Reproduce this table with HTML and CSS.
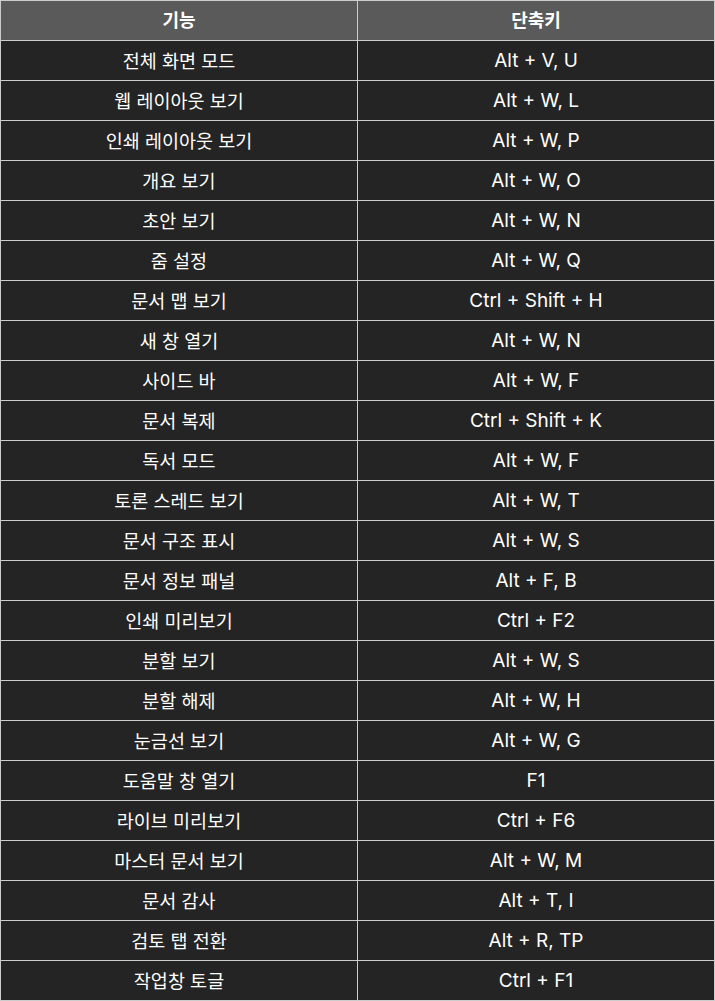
FILE: index.html
```html
<!DOCTYPE html>
<html lang="ko">
  <head>
    <meta charset="utf-8" />
    <meta name="viewport" content="width=device-width, initial-scale=1">
    <title>단축키</title>
    <link rel="stylesheet" href="styles.css">
  </head>
  <body>
    <table class="keys">
      <thead>
        <tr><th>기능</th><th>단축키</th></tr>
      </thead>
      <tbody>
        <tr><td>전체 화면 모드</td><td>Alt + V, U</td></tr>
        <tr><td>웹 레이아웃 보기</td><td>Alt + W, L</td></tr>
        <tr><td>인쇄 레이아웃 보기</td><td>Alt + W, P</td></tr>
        <tr><td>개요 보기</td><td>Alt + W, O</td></tr>
        <tr><td>초안 보기</td><td>Alt + W, N</td></tr>
        <tr><td>줌 설정</td><td>Alt + W, Q</td></tr>
        <tr><td>문서 맵 보기</td><td>Ctrl + Shift + H</td></tr>
        <tr><td>새 창 열기</td><td>Alt + W, N</td></tr>
        <tr><td>사이드 바</td><td>Alt + W, F</td></tr>
        <tr><td>문서 복제</td><td>Ctrl + Shift + K</td></tr>
        <tr><td>독서 모드</td><td>Alt + W, F</td></tr>
        <tr><td>토론 스레드 보기</td><td>Alt + W, T</td></tr>
        <tr><td>문서 구조 표시</td><td>Alt + W, S</td></tr>
        <tr><td>문서 정보 패널</td><td>Alt + F, B</td></tr>
        <tr><td>인쇄 미리보기</td><td>Ctrl + F2</td></tr>
        <tr><td>분할 보기</td><td>Alt + W, S</td></tr>
        <tr><td>분할 해제</td><td>Alt + W, H</td></tr>
        <tr><td>눈금선 보기</td><td>Alt + W, G</td></tr>
        <tr><td>도움말 창 열기</td><td>F1</td></tr>
        <tr><td>라이브 미리보기</td><td>Ctrl + F6</td></tr>
        <tr><td>마스터 문서 보기</td><td>Alt + W, M</td></tr>
        <tr><td>문서 감사</td><td>Alt + T, I</td></tr>
        <tr><td>검토 탭 전환</td><td>Alt + R, TP</td></tr>
        <tr><td>작업창 토글</td><td>Ctrl + F1</td></tr>
      </tbody>
    </table>
  </body>
</html>
```

FILE: styles.css
```css
body{
  margin: 0;
  background: #ffffff;
  font-family: Inter, "Noto Sans CJK KR", sans-serif;
}
.keys{
  width: 715px;
  border-collapse: collapse;
  table-layout: fixed;
}
.keys th,
.keys td{
  border: 1px solid #cccccc;
  height: 39px;
  padding: 0;
  text-align: center;
  color: #ffffff;
  font-size: 18px;
  line-height: 24px;
}
.keys th{
  background: #5a5a5a;
  font-weight: bold;
}
.keys td{
  background: #242424;
  font-weight: normal;
}
.keys td:first-child{
  font-size: 18.5px;
}
.keys td:last-child{
  font-size: 19px;
}
```
